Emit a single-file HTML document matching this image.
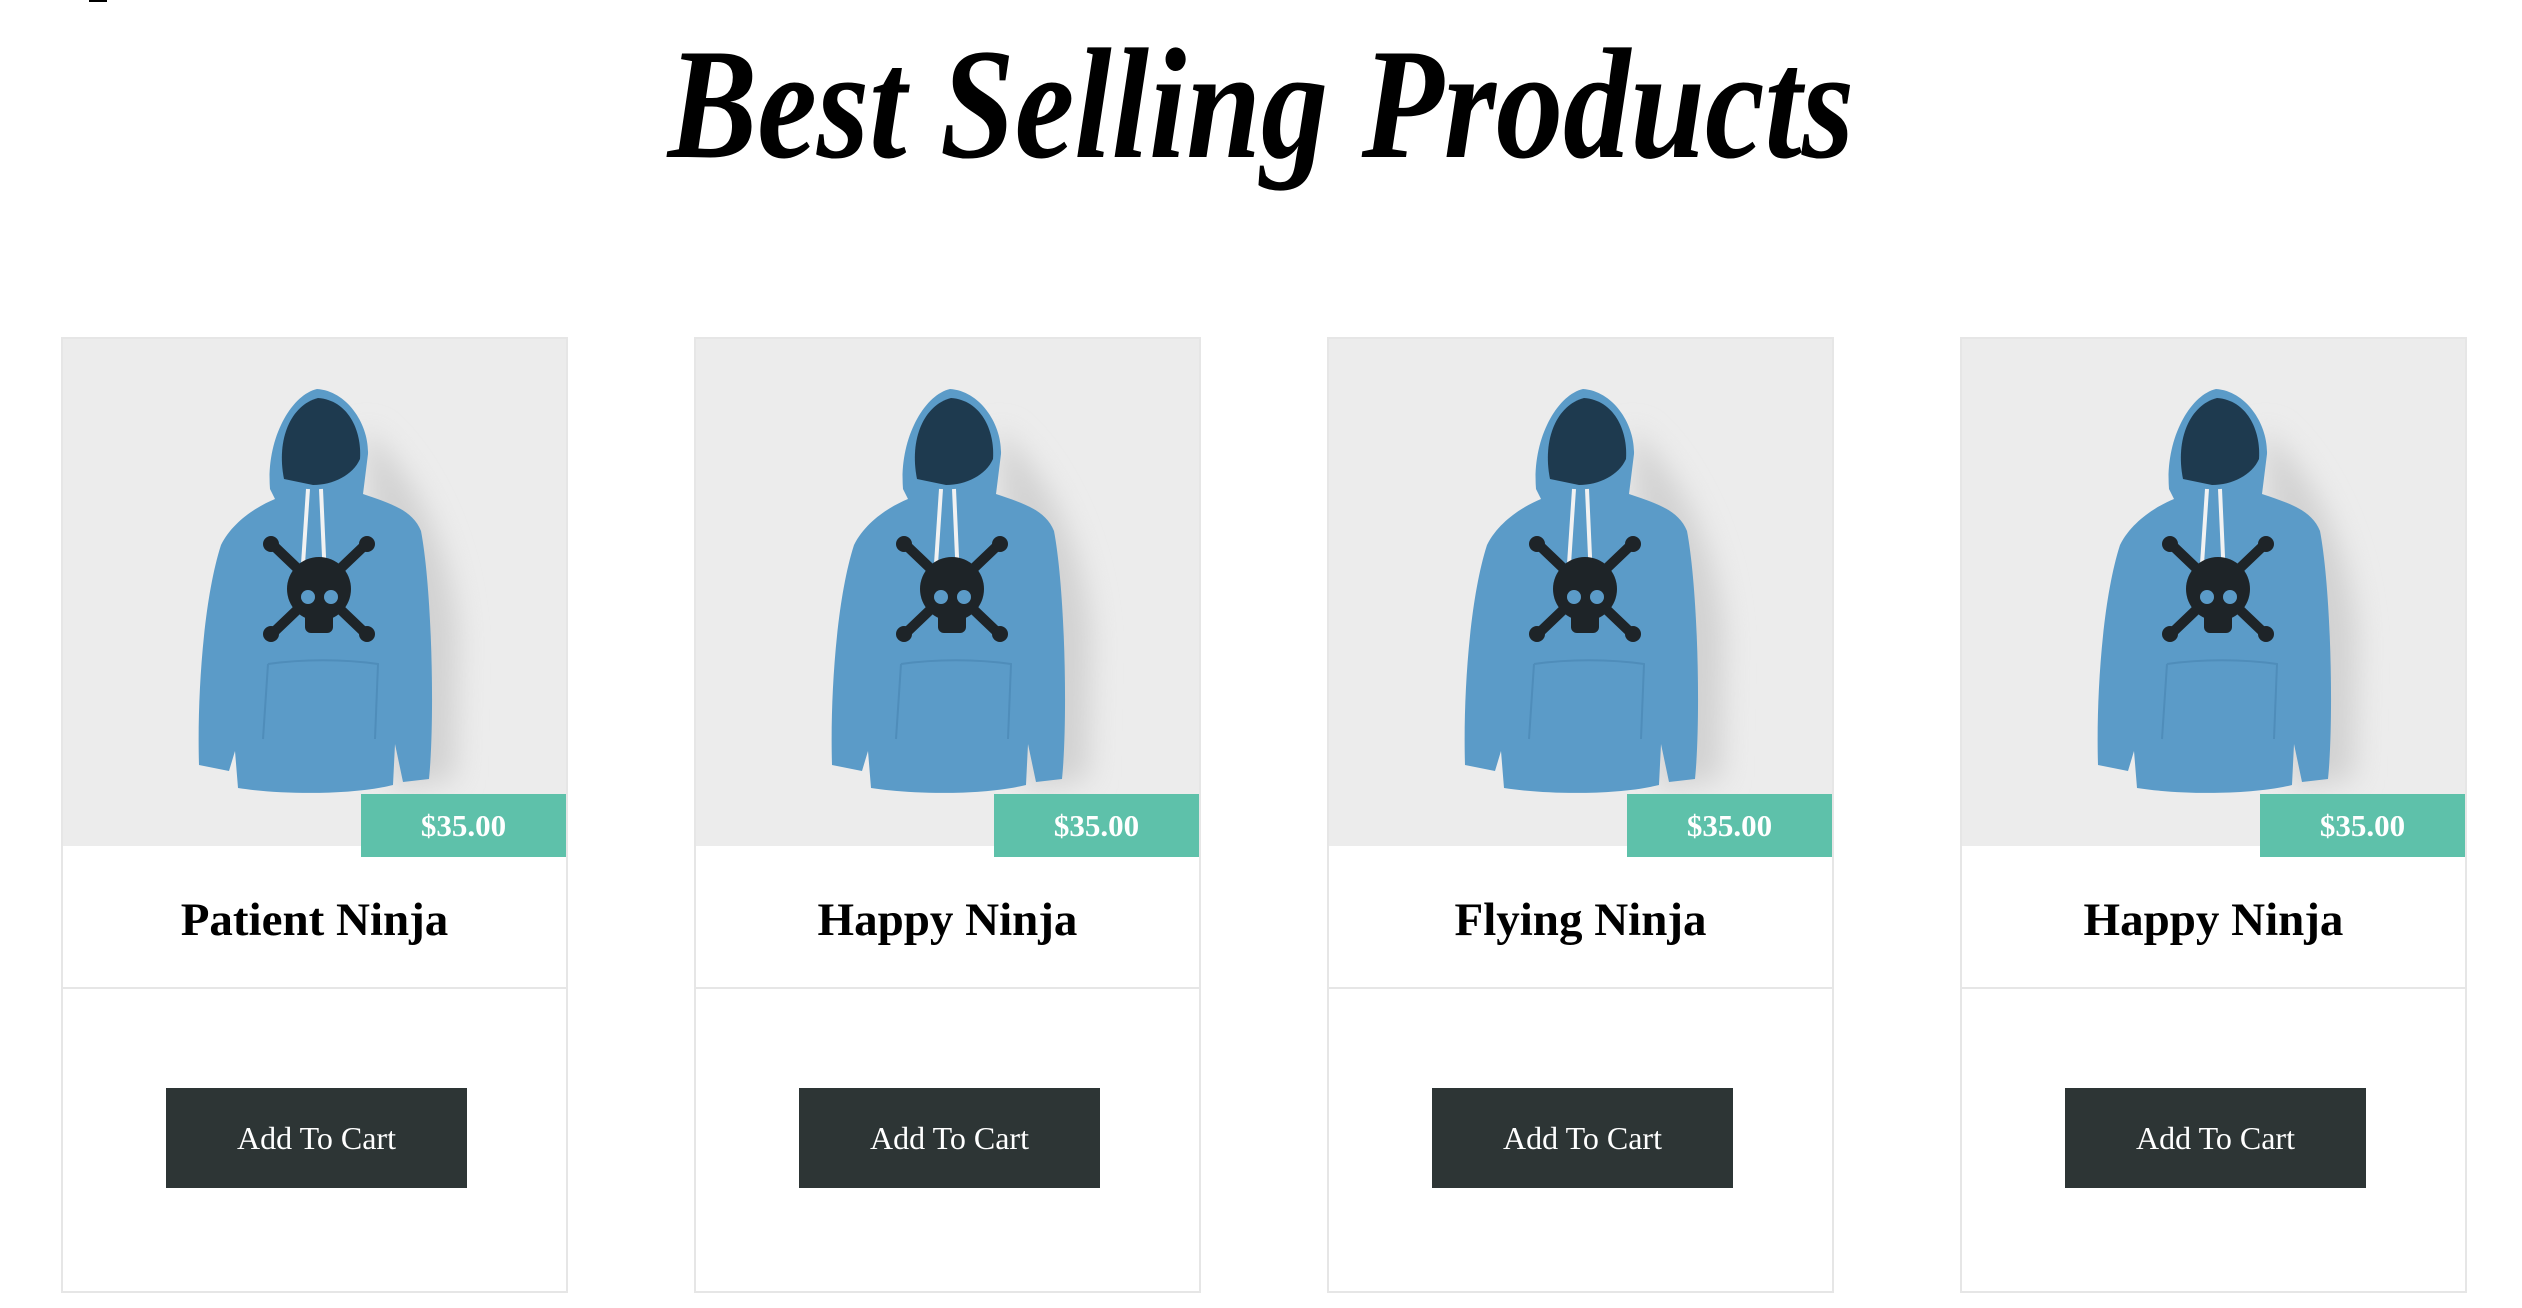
<!DOCTYPE html>
<html><head><meta charset="utf-8">
<style>
*{margin:0;padding:0;box-sizing:border-box}
body{width:2522px;height:1308px;background:#fff;position:relative;overflow:hidden;font-family:"Liberation Serif",serif}
.mark{position:absolute;left:89px;top:0;width:18px;height:2px;background:#000}
h1{position:absolute;left:0;width:2522px;top:26px;text-align:center;font:italic bold 158px/1 "Liberation Serif",serif;color:#000}
h1 span{display:inline-block;transform:scaleX(0.85);transform-origin:center}
.card{position:absolute;top:337px;width:507px;height:956px;border:2px solid #e6e6e6;background:#fff}
.img{position:absolute;left:0;top:0;width:503px;height:507px;background:#ececec;overflow:hidden}
.img svg{position:absolute;left:0;top:0}
.badge{position:absolute;right:0;top:455px;width:205px;height:63px;background:#5ec1aa;color:#fff;font-weight:bold;font-size:31px;line-height:63px;text-align:center}
.title{position:absolute;left:0;top:507px;width:503px;height:143px;padding-top:4px;text-align:center;font-weight:bold;font-size:47px;line-height:140px;border-bottom:2px solid #e6e6e6}
.btn{position:absolute;left:103px;top:749px;width:301px;height:100px;background:#2d3535;color:#fff;font-size:32px;line-height:100px;text-align:center}
</style></head><body>
<div class="mark"></div>
<h1><span>Best Selling Products</span></h1>

<div class="card" style="left:61px">
<div class="img"><svg width="505" height="507" viewBox="0 0 505 507">
<defs><filter id="b1" x="-50%" y="-50%" width="200%" height="200%"><feGaussianBlur stdDeviation="14"/></filter></defs>
<path d="M300 90 C340 120 390 200 395 300 L392 440 L330 450 Z" fill="#d2d2d2" filter="url(#b1)"/>
<path d="M207 150 C203 100 228 56 254 50 C284 52 306 85 305 115 L300 155 C330 165 350 172 358 192 C369 250 372 380 366 440 L340 443 L332 405 L330 446 C290 456 220 456 175 449 L172 412 L166 432 L136 426 C134 360 140 262 158 206 C170 182 195 167 212 160 Z" fill="#5b9bc8"/>
<path d="M221 140 C213 100 228 66 255 59 C284 61 299 90 297 120 C290 136 270 146 250 146 Z" fill="#1e3a4f"/>
<path d="M245 150 L240 225 M258 150 L262 240" stroke="#f2f2f2" stroke-width="4" fill="none"/>
<g fill="#1e2428">
<circle cx="256" cy="250" r="32"/>
<rect x="242" y="268" width="28" height="26" rx="6"/>
<path d="M212 208 L300 292 M300 208 L212 292" stroke="#1e2428" stroke-width="10"/>
<circle cx="208" cy="205" r="8"/><circle cx="304" cy="205" r="8"/>
<circle cx="208" cy="295" r="8"/><circle cx="304" cy="295" r="8"/>
</g>
<circle cx="245" cy="258" r="7" fill="#5b9bc8"/><circle cx="268" cy="258" r="7" fill="#5b9bc8"/>
<path d="M205 325 C240 320 280 320 315 325 L312 400 M205 325 L200 400" stroke="#4f8dba" stroke-width="2" fill="none"/>
</svg></div>
<div class="badge">$35.00</div>
<div class="title">Patient Ninja</div>
<div class="btn">Add To Cart</div>
</div>

<div class="card" style="left:694px">
<div class="img"><svg width="505" height="507" viewBox="0 0 505 507">
<path d="M300 90 C340 120 390 200 395 300 L392 440 L330 450 Z" fill="#d2d2d2" filter="url(#b1)"/>
<path d="M207 150 C203 100 228 56 254 50 C284 52 306 85 305 115 L300 155 C330 165 350 172 358 192 C369 250 372 380 366 440 L340 443 L332 405 L330 446 C290 456 220 456 175 449 L172 412 L166 432 L136 426 C134 360 140 262 158 206 C170 182 195 167 212 160 Z" fill="#5b9bc8"/>
<path d="M221 140 C213 100 228 66 255 59 C284 61 299 90 297 120 C290 136 270 146 250 146 Z" fill="#1e3a4f"/>
<path d="M245 150 L240 225 M258 150 L262 240" stroke="#f2f2f2" stroke-width="4" fill="none"/>
<g fill="#1e2428"><circle cx="256" cy="250" r="32"/><rect x="242" y="268" width="28" height="26" rx="6"/>
<path d="M212 208 L300 292 M300 208 L212 292" stroke="#1e2428" stroke-width="10"/>
<circle cx="208" cy="205" r="8"/><circle cx="304" cy="205" r="8"/><circle cx="208" cy="295" r="8"/><circle cx="304" cy="295" r="8"/></g>
<circle cx="245" cy="258" r="7" fill="#5b9bc8"/><circle cx="268" cy="258" r="7" fill="#5b9bc8"/>
<path d="M205 325 C240 320 280 320 315 325 L312 400 M205 325 L200 400" stroke="#4f8dba" stroke-width="2" fill="none"/>
</svg></div>
<div class="badge">$35.00</div>
<div class="title">Happy Ninja</div>
<div class="btn">Add To Cart</div>
</div>

<div class="card" style="left:1327px">
<div class="img"><svg width="505" height="507" viewBox="0 0 505 507">
<path d="M300 90 C340 120 390 200 395 300 L392 440 L330 450 Z" fill="#d2d2d2" filter="url(#b1)"/>
<path d="M207 150 C203 100 228 56 254 50 C284 52 306 85 305 115 L300 155 C330 165 350 172 358 192 C369 250 372 380 366 440 L340 443 L332 405 L330 446 C290 456 220 456 175 449 L172 412 L166 432 L136 426 C134 360 140 262 158 206 C170 182 195 167 212 160 Z" fill="#5b9bc8"/>
<path d="M221 140 C213 100 228 66 255 59 C284 61 299 90 297 120 C290 136 270 146 250 146 Z" fill="#1e3a4f"/>
<path d="M245 150 L240 225 M258 150 L262 240" stroke="#f2f2f2" stroke-width="4" fill="none"/>
<g fill="#1e2428"><circle cx="256" cy="250" r="32"/><rect x="242" y="268" width="28" height="26" rx="6"/>
<path d="M212 208 L300 292 M300 208 L212 292" stroke="#1e2428" stroke-width="10"/>
<circle cx="208" cy="205" r="8"/><circle cx="304" cy="205" r="8"/><circle cx="208" cy="295" r="8"/><circle cx="304" cy="295" r="8"/></g>
<circle cx="245" cy="258" r="7" fill="#5b9bc8"/><circle cx="268" cy="258" r="7" fill="#5b9bc8"/>
<path d="M205 325 C240 320 280 320 315 325 L312 400 M205 325 L200 400" stroke="#4f8dba" stroke-width="2" fill="none"/>
</svg></div>
<div class="badge">$35.00</div>
<div class="title">Flying Ninja</div>
<div class="btn">Add To Cart</div>
</div>

<div class="card" style="left:1960px">
<div class="img"><svg width="505" height="507" viewBox="0 0 505 507">
<path d="M300 90 C340 120 390 200 395 300 L392 440 L330 450 Z" fill="#d2d2d2" filter="url(#b1)"/>
<path d="M207 150 C203 100 228 56 254 50 C284 52 306 85 305 115 L300 155 C330 165 350 172 358 192 C369 250 372 380 366 440 L340 443 L332 405 L330 446 C290 456 220 456 175 449 L172 412 L166 432 L136 426 C134 360 140 262 158 206 C170 182 195 167 212 160 Z" fill="#5b9bc8"/>
<path d="M221 140 C213 100 228 66 255 59 C284 61 299 90 297 120 C290 136 270 146 250 146 Z" fill="#1e3a4f"/>
<path d="M245 150 L240 225 M258 150 L262 240" stroke="#f2f2f2" stroke-width="4" fill="none"/>
<g fill="#1e2428"><circle cx="256" cy="250" r="32"/><rect x="242" y="268" width="28" height="26" rx="6"/>
<path d="M212 208 L300 292 M300 208 L212 292" stroke="#1e2428" stroke-width="10"/>
<circle cx="208" cy="205" r="8"/><circle cx="304" cy="205" r="8"/><circle cx="208" cy="295" r="8"/><circle cx="304" cy="295" r="8"/></g>
<circle cx="245" cy="258" r="7" fill="#5b9bc8"/><circle cx="268" cy="258" r="7" fill="#5b9bc8"/>
<path d="M205 325 C240 320 280 320 315 325 L312 400 M205 325 L200 400" stroke="#4f8dba" stroke-width="2" fill="none"/>
</svg></div>
<div class="badge">$35.00</div>
<div class="title">Happy Ninja</div>
<div class="btn">Add To Cart</div>
</div>
</body></html>
